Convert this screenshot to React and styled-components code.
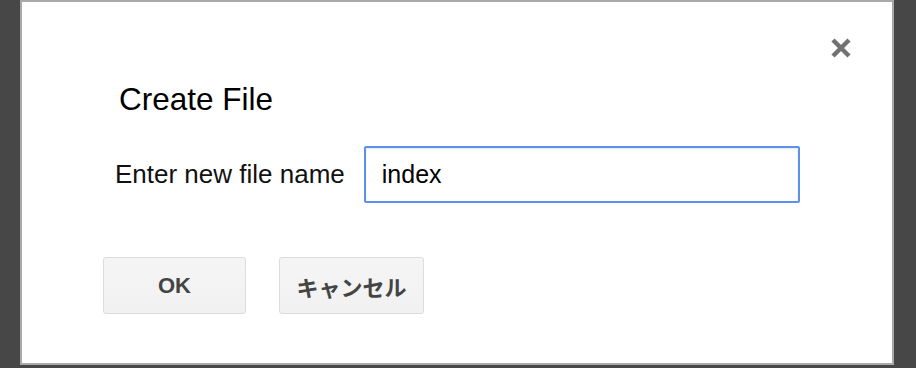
import styled, { createGlobalStyle } from "styled-components"

const Global = createGlobalStyle`
  html, body {
    margin: 0;
    padding: 0;
    background: #474747;
  }
  body {
    font-family: "Liberation Sans", Arial, sans-serif;
    height: 368px;
    overflow: hidden;
  }
`

const Dialog = styled.div`
  box-sizing: border-box;
  margin-left: 20px;
  width: 874px;
  height: 365px;
  background: #fff;
  border: 2px solid #a9a9a9;
  display: flex;
  flex-direction: column;
  padding: 33px 38px 0 80px;
`

const TopBar = styled.div`
  display: flex;
  justify-content: flex-end;
  height: 28px;
`

const Close = styled.button`
  width: 26px;
  height: 26px;
  padding: 0;
  margin: 0;
  border: none;
  background: none;
  display: flex;
  align-items: center;
  justify-content: center;
  cursor: pointer;

  svg {
    filter: blur(0.5px);
  }
`

const Title = styled.h1`
  margin: 18px 0 0 17px;
  font-size: 31.5px;
  line-height: 36px;
  font-weight: normal;
  color: #000;
`

const Row = styled.div`
  display: flex;
  align-items: center;
  margin-top: 29px;
  padding-left: 13px;
  gap: 19px;
`

const Label = styled.label`
  font-size: 26px;
  color: #111;
`

const Input = styled.input`
  box-sizing: border-box;
  width: 436px;
  height: 57px;
  border: 2px solid #5c90ef;
  border-radius: 2px;
  padding: 0 16px;
  font-family: "Liberation Sans", Arial, sans-serif;
  font-size: 25px;
  color: #000;
  outline: none;
  box-shadow: inset 0 1px 2px rgba(0, 0, 0, 0.1);
`

const Buttons = styled.div`
  display: flex;
  gap: 33px;
  margin-top: 54px;
  padding-left: 1px;
`

const Button = styled.button`
  box-sizing: border-box;
  height: 57px;
  width: ${(p) => p.w}px;
  border: 1px solid #dcdcdc;
  border-radius: 3px;
  background: linear-gradient(#f5f5f5, #f1f1f1);
  color: #444;
  font-family: "Liberation Sans", "Noto Sans CJK JP", sans-serif;
  font-weight: bold;
  font-size: 22px;
  padding: 0;
`

export default function App() {
  return (
    <>
      <Global />
      <Dialog>
        <TopBar>
          <Close aria-label="close">
            <svg width="24" height="24" viewBox="0 0 24 24">
              <path d="M4 4 L20 20 M20 4 L4 20" stroke="#727272" strokeWidth="4.5" />
            </svg>
          </Close>
        </TopBar>
        <Title>Create File</Title>
        <Row>
          <Label>Enter new file name</Label>
          <Input defaultValue="index" />
        </Row>
        <Buttons>
          <Button w={143}>OK</Button>
          <Button w={145}>キャンセル</Button>
        </Buttons>
      </Dialog>
    </>
  )
}
